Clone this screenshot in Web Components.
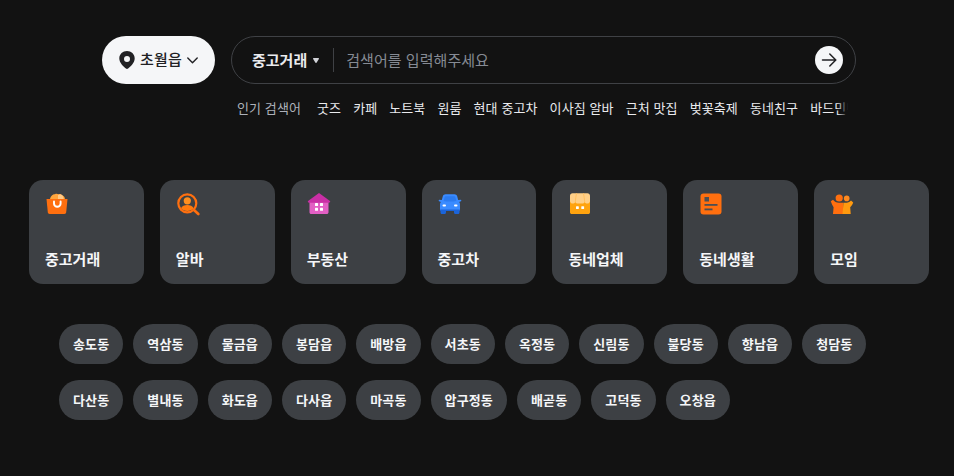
<!doctype html>
<html lang="ko">
<head>
<meta charset="utf-8">
<title>검색</title>
<style>
	html, body { margin: 0; background: #121212; }
	body { font-family: "Noto Sans CJK KR", "Noto Sans", sans-serif; color: #fff; height: 476px; overflow: hidden; }
</style>
</head>
<body>
<search-header></search-header>
<trend-row label="인기 검색어">
	<a>굿즈</a><a>카페</a><a>노트북</a><a>원룸</a><a>현대 중고차</a><a>이사짐 알바</a><a>근처 맛집</a><a>벚꽃축제</a><a>동네친구</a><a>바드민턴</a>
</trend-row>
<category-grid>
	<category-card label="중고거래" icon="bag"></category-card>
	<category-card label="알바" icon="job"></category-card>
	<category-card label="부동산" icon="house"></category-card>
	<category-card label="중고차" icon="car"></category-card>
	<category-card label="동네업체" icon="shop"></category-card>
	<category-card label="동네생활" icon="note"></category-card>
	<category-card label="모임" icon="people"></category-card>
</category-grid>
<town-chips>
	<town-chip>송도동</town-chip><town-chip>역삼동</town-chip><town-chip>물금읍</town-chip><town-chip>봉담읍</town-chip><town-chip>배방읍</town-chip><town-chip>서초동</town-chip><town-chip>옥정동</town-chip><town-chip>신림동</town-chip><town-chip>불당동</town-chip><town-chip>향남읍</town-chip><town-chip>청담동</town-chip>
	<town-chip>다산동</town-chip><town-chip>별내동</town-chip><town-chip>화도읍</town-chip><town-chip>다사읍</town-chip><town-chip>마곡동</town-chip><town-chip>압구정동</town-chip><town-chip>배곧동</town-chip><town-chip>고덕동</town-chip><town-chip>오창읍</town-chip>
</town-chips>
<script>
const ICONS = {
	bag: `<path d="M5 8c0-3.500 2.500-6 5-5.800 1-.8 2.500-.6 3.300.1 1.500-.5 3.200-.1 3.700 1C19.500 4 20 6 20 8z" fill="#ffa53d"/><path d="M13 3c1.500-1 3.500-.8 4.600.6L19 8h-6z" fill="#ffc987"/><path d="M1.500 7h21l-1.300 13.300c-.1 1-.8 1.700-1.800 1.700H4.600c-1 0-1.700-.7-1.800-1.700z" fill="#ff6f0f"/><path d="M9 9.500v2a3.300 3.300 0 0 0 6.600 0v-2" fill="none" stroke="#fff" stroke-width="1.900" stroke-linecap="round"/>`,
	job: `<circle cx="11.300" cy="11.300" r="9" fill="none" stroke="#ff6f0f" stroke-width="2.200"/><circle cx="11.300" cy="8.800" r="3.600" fill="#ff8f1f"/><path d="M5 16.300c1-2.400 3.500-3.300 6.300-3.300s5.300.9 6.300 3.300c-1.500 1.800-3.800 2.800-6.300 2.800S6.500 18.100 5 16.300z" fill="#ff7a0f"/><path d="M18 18l4.300 4" stroke="#ff6f0f" stroke-width="2.600" stroke-linecap="round"/>`,
	house: `<path d="M2.500 9h19v11.200c0 1-.8 1.800-1.800 1.800H4.300c-1 0-1.800-.8-1.800-1.800z" fill="#e25fc4"/><path d="M.7 9.200 12 1l11.300 8.200-.9 1.500H1.600z" fill="#c92fa5"/><g fill="#fff"><rect x="8" y="11" width="3" height="3" rx=".5"/><rect x="13" y="11" width="3" height="3" rx=".5"/><rect x="8" y="15.800" width="3" height="3" rx=".5"/><rect x="13" y="15.800" width="3" height="3" rx=".5"/></g>`,
	car: `<path d="M2.500 17h5.500v3.500c0 .8-.6 1.500-1.400 1.500H3.900c-.8 0-1.400-.7-1.400-1.500zM16 17h5.500v3.500c0 .8-.6 1.500-1.400 1.500h-2.700c-.8 0-1.400-.7-1.400-1.500z" fill="#1b64da"/><path d="M7.500 2.300h9c1.200 0 2.200.7 2.600 1.800L20.200 8l2.800-.2.400 1.300-2.200 1c.5.600.8 1.400.8 2.300V17c0 1-.8 1.900-1.900 1.900H3.900C2.800 18.900 2 18 2 17v-4.600c0-.9.300-1.700.8-2.300l-2.200-1L1 7.800 3.800 8l1.100-3.900c.4-1.100 1.400-1.800 2.600-1.800z" fill="#3a8bff"/><path d="M7.800 4.300h8.400c.6 0 1 .3 1.200.9L18.400 9c-1.900.4-4 .6-6.400.6S7.500 9.400 5.600 9l1-3.800c.2-.6.600-.9 1.200-.9z" fill="#2b7bf0"/><rect x="4.500" y="12.400" width="3.500" height="2" rx="1" fill="#fff"/><rect x="16" y="12.400" width="3.500" height="2" rx="1" fill="#fff"/><rect x="2.200" y="17.400" width="19.600" height="1.500" rx=".7" fill="#1b64da"/>`,
	shop: `<path d="M2 9h20v11.200c0 1-.8 1.800-1.800 1.800H3.800c-1 0-1.800-.8-1.800-1.800z" fill="#ffa30f"/><path d="M4.500 1.300h15c1.400 0 2.500 1.100 2.500 2.500V9c0 1.500-1.200 2.600-2.700 2.600-1.100 0-2.100-.6-2.600-1.600-.5 1-1.500 1.600-2.500 1.600h-4.400c-1 0-2-.6-2.500-1.600-.5 1-1.500 1.600-2.600 1.600C3.200 11.600 2 10.500 2 9V3.800c0-1.400 1.100-2.500 2.500-2.500z" fill="#ffcf87"/><path d="M7.300 10c.3-3 .6-6 1.200-8.700M16.700 10c-.3-3-.6-6-1.200-8.700" stroke="#ffbf5f" stroke-width="1" fill="none"/><rect x="8" y="14.200" width="2.800" height="2.800" rx=".6" fill="#fff"/><rect x="13.300" y="14.200" width="2.800" height="2.800" rx=".6" fill="#fff"/>`,
	note: `<rect x="1.500" y="1.500" width="21" height="21" rx="3" fill="#ff6f0f"/><rect x="5.500" y="5" width="4.500" height="4.500" fill="#4d4f53"/><rect x="5.500" y="12" width="13" height="1.800" fill="#4d4f53"/><rect x="5.500" y="16.500" width="8" height="1.800" fill="#4d4f53"/>`,
	people: `<circle cx="9.200" cy="6" r="3.600" fill="#ff6f0f"/><circle cx="16.700" cy="6.400" r="2.800" fill="#ff8a1f"/><path d="M.8 9.200 3 7.700c1.500 1.700 3.300 3.100 6 3.100h4.500L13 22H3l.6-6.800C2.500 13.500 1.500 11.500.8 9.200z" fill="#ff6f0f"/><path d="M13.500 10.800H15c2.700 0 4.700-.8 6-2.300l2.200 2c-.7 1.900-1.800 3.700-3 4.700l.5 6.800H12.500z" fill="#ff9a0f"/>`
};

class SearchHeader extends HTMLElement {
	constructor() {
		super();
		this.attachShadow({ mode: "open" }).innerHTML = `
			<style>
				:host { display: flex; gap: 16px; padding: 36px 0 0 102px; }
				.loc { box-sizing: border-box; width: 113px; height: 48px; border-radius: 24px; background: #f5f6f8; color: #212124; display: flex; align-items: center; padding-left: 17px; font-size: 15px; font-weight: 500; white-space: nowrap; }
				.loc svg { flex: none; }
				.loc span { margin: -3px 5px 0 5px; letter-spacing: .2px; }
				.search { box-sizing: border-box; width: 625px; height: 48px; border: 1px solid #3f4145; border-radius: 24px; display: flex; align-items: center; padding: 0 12px 0 20px; }
				.cat { font-size: 15px; font-weight: 700; color: #eaebee; white-space: nowrap; margin-top: -2px; }
				.tri { margin-left: 6px; display: flex; }
				.bar { width: 1px; height: 24px; background: #3f4145; margin: 0 12px 0 14px; }
				.ph { flex: 1; font-size: 15px; color: #868b94; white-space: nowrap; letter-spacing: .05px; margin-top: -2px; }
				.go { width: 28px; height: 28px; border-radius: 50%; background: #f5f6f8; display: flex; align-items: center; justify-content: center; }
			</style>
			<div class="loc">
				<svg width="16" height="18" viewBox="0 0 16 18"><path fill-rule="evenodd" d="M8 0c4.200 0 7.700 3.200 7.700 7.400 0 4.400-4.300 8.100-6.600 10.100-.6.600-1.600.600-2.200 0C4.600 15.500.3 11.800.3 7.400.3 3.200 3.800 0 8 0zM8 5a3 3 0 1 0 0 6 3 3 0 0 0 0-6z" fill="#212124"/></svg>
				<span>초월읍</span>
				<svg width="11" height="7" viewBox="0 0 11 7"><path d="M.8 1l4.700 4.700L10.200 1" fill="none" stroke="#212124" stroke-width="1.400" stroke-linecap="round" stroke-linejoin="round"/></svg>
			</div>
			<div class="search">
				<span class="cat">중고거래</span>
				<span class="tri"><svg width="6" height="5" viewBox="0 0 6 5"><path d="M.7 0h4.600c.6 0 .9.600.6 1.100L3.500 4.700c-.3.300-.7.300-1 0L.1 1.100C-.2.600.1 0 .7 0z" fill="#d1d3d8"/></svg></span>
				<span class="bar"></span>
				<span class="ph">검색어를 입력해주세요</span>
				<span class="go"><svg width="16" height="14" viewBox="0 0 16 14"><path d="M1.500 7h13M8.800 1l6 6-6 6" fill="none" stroke="#212124" stroke-width="1.500" stroke-linecap="round" stroke-linejoin="round"/></svg></span>
			</div>`;
	}
}
customElements.define("search-header", SearchHeader);

class TrendRow extends HTMLElement {
	constructor() {
		super();
		this.attachShadow({ mode: "open" }).innerHTML = `
			<style>
				:host { display: flex; gap: 16px; width: 614px; margin: 14px 0 0 237px; height: 19px; font-size: 13px; line-height: 19px; overflow: hidden; white-space: nowrap; position: relative; letter-spacing: .1px; }
				.label { color: #adb1ba; width: 64px; flex: none; }
				.list { display: flex; }
				::slotted(a) { color: #eaebee; margin-right: 12px; flex: none; }
				.fade { position: absolute; right: 0; top: 0; bottom: 0; width: 14px; background: linear-gradient(to right, rgba(18,18,18,0), #121212 80%); }
			</style>
			<span class="label"></span>
			<div class="list"><slot></slot></div>
			<span class="fade"></span>`;
		this.shadowRoot.querySelector(".label").textContent = this.getAttribute("label");
	}
}
customElements.define("trend-row", TrendRow);

class CategoryGrid extends HTMLElement {
	constructor() {
		super();
		this.attachShadow({ mode: "open" }).innerHTML = `
			<style>
				:host { display: grid; grid-template-columns: repeat(7, 1fr); gap: 16px; width: 900px; margin: 63px 0 0 29px; }
			</style>
			<slot></slot>`;
	}
}
customElements.define("category-grid", CategoryGrid);

class CategoryCard extends HTMLElement {
	constructor() {
		super();
		this.attachShadow({ mode: "open" }).innerHTML = `
			<style>
				:host { display: flex; flex-direction: column; justify-content: space-between; box-sizing: border-box; height: 104px; padding: 12px 16px 14px; background: #3d4044; border-radius: 14px; }
				svg { display: block; }
				.name { font-size: 15px; font-weight: 700; color: #f5f6f8; line-height: 22px; }
			</style>
			<svg width="24" height="24" viewBox="0 0 24 24">${ICONS[this.getAttribute("icon")] || ""}</svg>
			<div class="name"></div>`;
		this.shadowRoot.querySelector(".name").textContent = this.getAttribute("label");
	}
}
customElements.define("category-card", CategoryCard);

class TownChips extends HTMLElement {
	constructor() {
		super();
		this.attachShadow({ mode: "open" }).innerHTML = `
			<style>
				:host { display: flex; flex-wrap: wrap; gap: 16px 10px; width: 820px; margin: 40px 0 0 59px; }
			</style>
			<slot></slot>`;
	}
}
customElements.define("town-chips", TownChips);

class TownChip extends HTMLElement {
	constructor() {
		super();
		this.attachShadow({ mode: "open" }).innerHTML = `
			<style>
				:host { display: flex; align-items: center; box-sizing: border-box; height: 40px; padding: 0 14px 2px; border-radius: 20px; background: #3d4044; color: #f5f6f8; font-size: 13px; font-weight: 700; white-space: nowrap; letter-spacing: .14px; }
			</style>
			<slot></slot>`;
	}
}
customElements.define("town-chip", TownChip);
</script>
</body>
</html>
